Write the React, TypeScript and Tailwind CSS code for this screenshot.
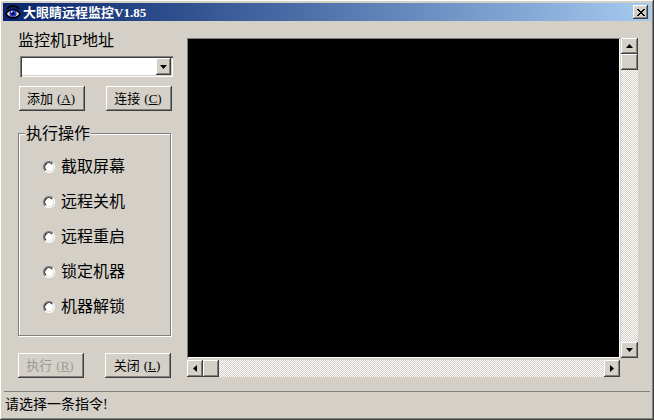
const cjk = "font-['Liberation_Serif','Noto_Sans_CJK_SC',serif]";
const raised = 'shadow-[inset_-1px_-1px_0_#404040,inset_1px_1px_0_#ffffff,inset_-2px_-2px_0_#808080,inset_2px_2px_0_#d4d0c8]';
const sunken = 'shadow-[inset_1px_1px_0_#808080,inset_-1px_-1px_0_#ffffff]';
const checker = 'bg-[repeating-conic-gradient(#ffffff_0_25%,#d4d0c8_0_50%)] bg-[length:2px_2px]';

function EyeIcon() {
  return (
    <svg width="16" height="16" viewBox="0 0 16 16" className="shrink-0">
      <path d="M1 10 C3 5 12 4 15 10 C12 15 4 15 1 10Z" fill="#e8e8f0" stroke="#000" strokeWidth="1.6" />
      <path d="M2 5 C5 1 11 1 14 5" fill="none" stroke="#000" strokeWidth="1.6" />
      <circle cx="8" cy="9.5" r="3.6" fill="#2a3fd0" />
      <circle cx="8" cy="9.5" r="1.5" fill="#000018" />
      <rect x="6" y="7" width="1.5" height="1.5" fill="#ffffff" />
    </svg>
  );
}

function CloseIcon() {
  return (
    <svg width="8" height="7" viewBox="0 0 8 7">
      <path d="M0 0h2v1h1v1h2V1h1V0h2v1H7v1H6v1H5v1h1v1h1v1h1v1H6V6H5V5H3v1H2v1H0V6h1V5h1V4h1V3H2V2H1V1H0z" fill="#000" />
    </svg>
  );
}

function Arrow({ dir }: { dir: 'up' | 'down' | 'left' | 'right' }) {
  const points = {
    up: '3.5,0 7,4 0,4',
    down: '0,0 7,0 3.5,4',
    left: '4,0 4,7 0,3.5',
    right: '0,0 4,3.5 0,7',
  }[dir];
  const vertical = dir === 'up' || dir === 'down';
  return (
    <svg width={vertical ? 7 : 4} height={vertical ? 4 : 7} viewBox={vertical ? '0 0 7 4' : '0 0 4 7'}>
      <polygon points={points} fill="#000" />
    </svg>
  );
}

function ScrollButton({ dir, className }: { dir: 'up' | 'down' | 'left' | 'right'; className: string }) {
  return (
    <div className={`flex items-center justify-center bg-[#d4d0c8] ${raised} ${className}`}>
      <Arrow dir={dir} />
    </div>
  );
}

function Button({ label, hotkey, disabled }: { label: string; hotkey: string; disabled?: boolean }) {
  return (
    <div className={`flex h-[25px] w-[66px] items-center justify-center bg-[#d4d0c8] pr-[2px] text-[13px] ${raised} ${disabled ? 'text-[#9a9a94]' : 'text-black'}`}>
      <span>{label}</span>
      <span className="ml-[4px]">
        (<span className="underline">{hotkey}</span>)
      </span>
    </div>
  );
}

function Radio({ label }: { label: string }) {
  return (
    <div className="flex h-[35px] items-center gap-[6px] text-[16px] text-black">
      <svg width="12" height="12" viewBox="0 0 12 12" className="shrink-0">
        <circle cx="6" cy="6" r="5.5" fill="#d4d0c8" />
        <circle cx="6" cy="6" r="4.2" fill="#ffffff" />
        <path d="M2.1 9.9 A5.5 5.5 0 0 1 9.9 2.1" fill="none" stroke="#808080" strokeWidth="1.1" />
        <path d="M3 9 A4.2 4.2 0 0 1 9 3" fill="none" stroke="#202020" strokeWidth="1.1" />
        <path d="M2.1 9.9 A5.5 5.5 0 0 0 9.9 2.1" fill="none" stroke="#ffffff" strokeWidth="1.1" />
      </svg>
      <span>{label}</span>
    </div>
  );
}

export default function App() {
  return (
    <div className={`flex h-[420px] w-[654px] flex-col overflow-hidden bg-[#d4d0c8] p-[3px] ${cjk} ${raised}`}>
      <div className="flex h-[18px] shrink-0 items-center bg-gradient-to-r from-[#0a246a] to-[#a6caf0] pl-[2px] pr-[3px]">
        <EyeIcon />
        <span className="ml-[2px] text-[13px] font-bold leading-none text-white">大眼睛远程监控V1.85</span>
        <div className={`ml-auto flex h-[14px] w-[15px] items-center justify-center bg-[#d4d0c8] ${raised}`}>
          <CloseIcon />
        </div>
      </div>

      <div className="flex min-h-0 flex-1 pl-[15px] pr-[11px] pt-[10px]">
        <div className="flex w-[154px] shrink-0 flex-col">
          <div className="h-[25px] text-[16px] leading-[20px] text-black">
            监控机<span className="font-['DejaVu_Serif'] text-[15px]">IP</span>地址
          </div>
          <div className="ml-[2px] flex h-[21px] w-[153px] items-center justify-end bg-white pr-[2px] shadow-[inset_1px_1px_0_#808080,inset_2px_2px_0_#404040,inset_-1px_-1px_0_#ffffff,inset_-2px_-2px_0_#d4d0c8]">
            <ScrollButton dir="down" className="h-[17px] w-[15px]" />
          </div>
          <div className="ml-[1px] mt-[9px] flex w-[153px] justify-between">
            <Button label="添加" hotkey="A" />
            <Button label="连接" hotkey="C" />
          </div>

          <div className="relative mt-[22px] h-[203px] w-[153px] border border-[#808080] pl-[24px] pt-[15px] shadow-[1px_1px_0_#ffffff,inset_1px_1px_0_#ffffff]">
            <span className="absolute left-[6px] top-[-9px] bg-[#d4d0c8] px-[1px] text-[16px] leading-[18px] text-black">执行操作</span>
            <Radio label="截取屏幕" />
            <Radio label="远程关机" />
            <Radio label="远程重启" />
            <Radio label="锁定机器" />
            <Radio label="机器解锁" />
          </div>

          <div className="mt-[17px] flex w-[153px] justify-between">
            <Button label="执行" hotkey="R" disabled />
            <Button label="关闭" hotkey="L" />
          </div>
        </div>

        <div className="ml-[15px] mt-[7px] flex flex-col">
          <div className="flex gap-[1px]">
            <div className={`h-[320px] w-[433px] bg-black p-[1px] ${sunken}`}>
              <div className="h-full w-full bg-black" />
            </div>
            <div className={`flex h-[320px] w-[17px] flex-col ${checker}`}>
              <ScrollButton dir="up" className="h-[16px] w-[17px] shrink-0" />
              <div className={`h-[16px] w-[17px] shrink-0 bg-[#d4d0c8] ${raised}`} />
              <div className="flex-1" />
              <ScrollButton dir="down" className="h-[16px] w-[17px] shrink-0" />
            </div>
          </div>
          <div className={`mt-[2px] flex h-[17px] w-[433px] ${checker}`}>
            <ScrollButton dir="left" className="h-[17px] w-[16px] shrink-0" />
            <div className={`h-[17px] w-[16px] shrink-0 bg-[#d4d0c8] ${raised}`} />
            <div className="flex-1" />
            <ScrollButton dir="right" className="h-[17px] w-[16px] shrink-0" />
          </div>
        </div>
      </div>

      <div className="mx-[1px] flex h-[26px] shrink-0 items-center border-t border-[#808080] pl-[1px] text-[14px] text-black">
        请选择一条指令!
      </div>
    </div>
  );
}
